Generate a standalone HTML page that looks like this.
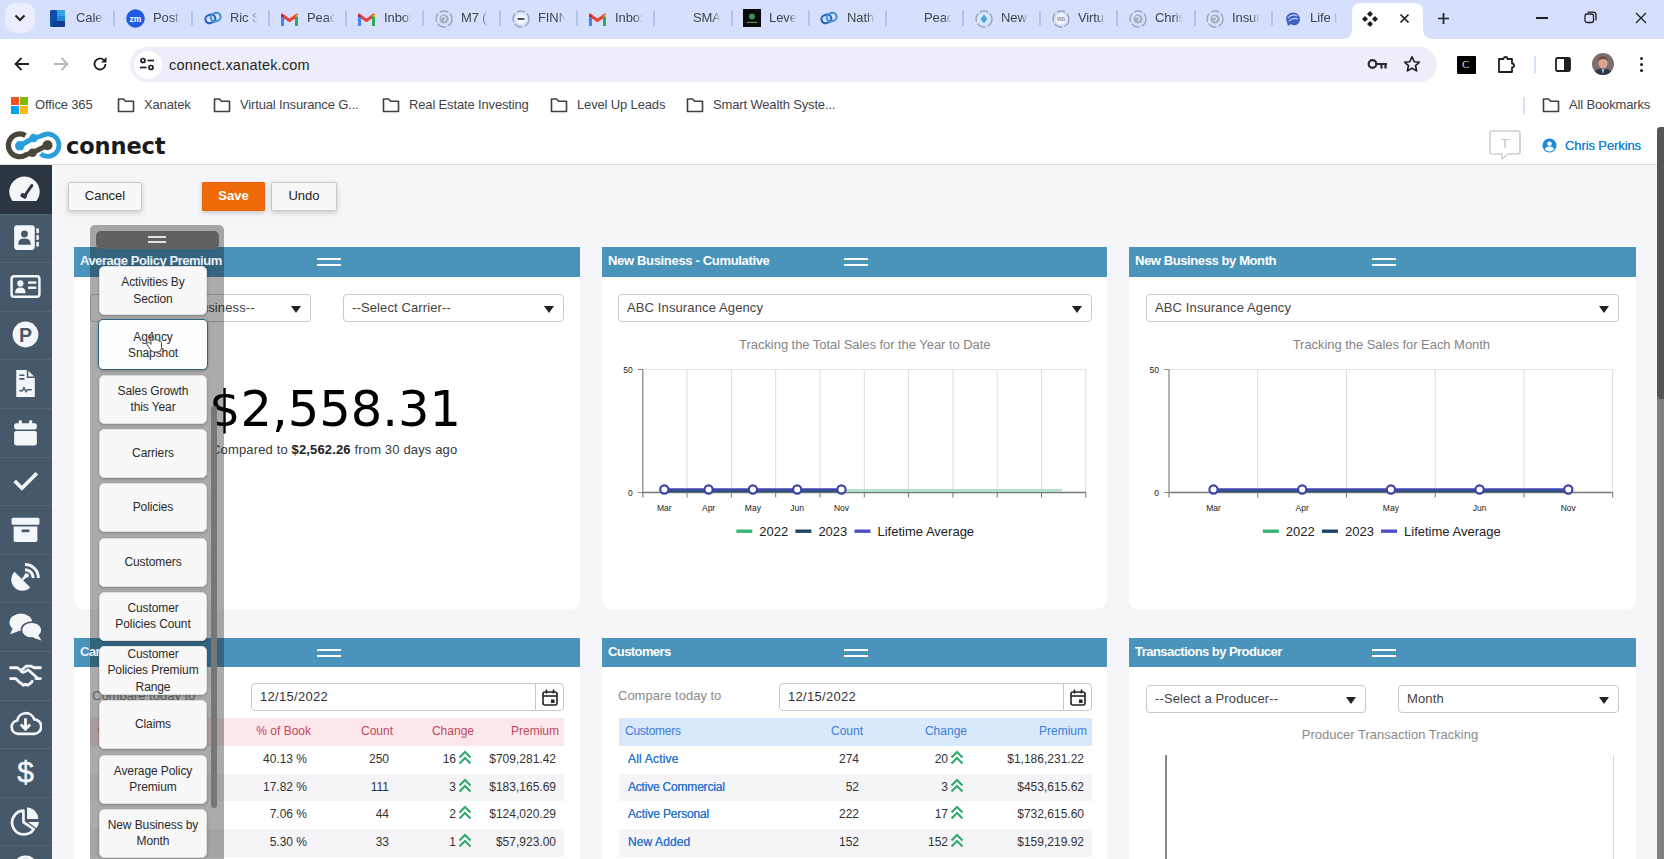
<!DOCTYPE html>
<html lang="en">
<head>
<meta charset="utf-8">
<title>connect</title>
<style>
*{box-sizing:border-box;margin:0;padding:0}
html,body{width:1664px;height:859px;overflow:hidden;background:#f6f6f9;font-family:"Liberation Sans",sans-serif;color:#333}
.abs{position:absolute}
#chrome{position:absolute;left:0;top:0;width:1664px;height:124px;background:#fff}
#tabstrip{position:absolute;left:0;top:0;width:1664px;height:39px;background:#d6e0fc}
.tab{position:absolute;top:0;height:39px;font-size:14px;color:#3c4043;white-space:nowrap}
.ttl{position:absolute;top:9px;left:0;font-size:13px;letter-spacing:-.1px;line-height:18px;color:#41464d;width:29px;overflow:hidden;white-space:nowrap;-webkit-mask-image:linear-gradient(90deg,#000 68%,transparent 96%);mask-image:linear-gradient(90deg,#000 68%,transparent 96%)}
.tsep{position:absolute;top:10px;width:2px;height:16px;background:#b0c4ef;border-radius:1px}
#toolbar{position:absolute;left:0;top:39px;width:1664px;height:49px;background:#fff}
#omni{position:absolute;left:130px;top:8px;width:1307px;height:35px;border-radius:17.500px;background:#eeeefa}
#omni .url{position:absolute;left:39px;top:8.500px;font-size:14.5px;line-height:18px;color:#1f1f1f;letter-spacing:0.2px}
#bm{position:absolute;left:0;top:88px;width:1664px;height:36px;background:#fff;font-size:13px;color:#3c4043}
.bmi{position:absolute;top:9px;line-height:16px;white-space:nowrap;color:#40444a;letter-spacing:-0.15px}
#app{position:absolute;left:0;top:124px;width:1664px;height:735px;background:#f6f6f9;overflow:hidden}
#apphead{position:absolute;left:0;top:0;width:1664px;height:41px;background:#fff;border-bottom:1px solid #dcdcdc}
#side{position:absolute;left:0;top:41px;width:52px;height:700px;background:#46596a}
.si{position:absolute;left:0;width:52px;height:49px;border-top:1px solid #526575}
.si svg{position:absolute;left:9px;top:6.500px;width:33px;height:33px}
.btn{position:absolute;top:58px;height:29px;border:1px solid #c9c9c9;background:#f8f8f8;border-radius:2px;font-size:13px;line-height:26px;text-align:center;color:#222;box-shadow:0 2px 5px rgba(0,0,0,.18)}
.card{position:absolute;background:#fff;border-radius:0 0 9px 9px}
.chead{position:absolute;left:0;top:0;width:100%;height:30px;background:#4a93ba;color:#fff;font-weight:700;font-size:13px;line-height:28px;padding-left:6px;letter-spacing:-0.35px}
.ham{position:absolute;top:11px;width:24px;height:8px;margin-left:-1px;border-top:2px solid #fff;border-bottom:2px solid #fff}
.sel{position:absolute;height:28px;border:1px solid #c8c8c8;border-radius:4px;background:#fff;font-size:13px;line-height:26px;padding-left:8px;color:#444;white-space:nowrap;letter-spacing:.12px}
.sel:after{content:"";position:absolute;right:9px;top:11px;border:5px solid transparent;border-top:7px solid #222;border-bottom:0}
.ctitle{position:absolute;font-size:13px;color:#8a8a8a;text-align:center;white-space:nowrap}
svg text{font-family:"Liberation Sans",sans-serif}
.tbl{position:absolute;font-size:12px}
.tr{position:absolute;left:0;width:100%;height:28px;line-height:27px}
.tr span{position:absolute;white-space:nowrap;text-align:right}
#panelbg{position:absolute;left:90px;top:101px;width:134px;height:640px;background:rgba(15,15,15,.35);border-radius:5px 5px 0 0;z-index:1}
#panel{position:absolute;left:90px;top:101px;width:134px;height:640px;z-index:3}
.pb{position:absolute;left:9px;width:108px;height:49px;background:#f8f8f8;border:1px solid #ddd;border-radius:5px;font-size:12px;letter-spacing:-.1px;line-height:16.5px;text-align:center;color:#2a2a2a;display:flex;align-items:center;justify-content:center;box-shadow:0 1px 3px rgba(0,0,0,.25)}
</style>
</head>
<body>
<div id="chrome">
 <div id="tabstrip">
<div class="abs" style="left:5px;top:3px;width:30px;height:30px;border-radius:10px;background:#e9edfd"></div>
<svg class="abs" style="left:14px;top:13.500px" width="12" height="8" viewBox="0 0 12 8"><path d="M1.500 1.500l4.500 4.500 4.500-4.500" fill="none" stroke="#1f1f1f" stroke-width="2"/></svg>
<svg class="abs" style="left:50px;top:10px" width="15" height="17" viewBox="0 0 15 17"><rect x="0" y="0" width="15" height="17" rx="2" fill="#1a6fd0"/><rect x="0" y="0" width="7" height="17" rx="2" fill="#0d4fa6"/><rect x="7" y="0" width="8" height="6" fill="#35a3ec"/><rect x="7" y="6" width="8" height="5" fill="#1d86dd"/><rect x="3" y="11" width="12" height="6" rx="1" fill="#0b3f8c"/></svg>
<span class="ttl" style="left:76px">Calen</span>
<svg class="abs" style="left:126px;top:9px" width="19" height="19" viewBox="0 0 19 19"><circle cx="9.500" cy="9.500" r="9.300" fill="#1f5ae0"/><text x="9.500" y="12.500" font-size="8.500" text-anchor="middle" fill="#fff" font-weight="700">zm</text></svg>
<span class="ttl" style="left:153px">Post</span>
<svg class="abs" style="left:204px;top:10px" width="18" height="16" viewBox="0 0 18 16"><g transform="rotate(-18 9 8)"><rect x="1.2" y="4" width="10" height="8" rx="4" fill="none" stroke="#2a62b8" stroke-width="2"/><rect x="6.8" y="4" width="10" height="8" rx="4" fill="none" stroke="#3f8fd6" stroke-width="2"/></g></svg>
<span class="ttl" style="left:230px">Ric S</span>
<svg class="abs" style="left:281px;top:12px" width="17" height="14" viewBox="0 0 17 14"><path d="M1 13V3l7.5 5.5L16 3v10" fill="none" stroke="#ea4335" stroke-width="3" stroke-linejoin="round"/><rect x="0" y="4" width="3" height="10" fill="#4285f4"/><rect x="14" y="4" width="3" height="10" fill="#34a853"/><path d="M14 4l3-2v3z" fill="#fbbc04"/><path d="M0 2l3 2v1H0z" fill="#c5221f"/></svg>
<span class="ttl" style="left:307px">Peach</span>
<svg class="abs" style="left:358px;top:12px" width="17" height="14" viewBox="0 0 17 14"><path d="M1 13V3l7.5 5.5L16 3v10" fill="none" stroke="#ea4335" stroke-width="3" stroke-linejoin="round"/><rect x="0" y="4" width="3" height="10" fill="#4285f4"/><rect x="14" y="4" width="3" height="10" fill="#34a853"/><path d="M14 4l3-2v3z" fill="#fbbc04"/><path d="M0 2l3 2v1H0z" fill="#c5221f"/></svg>
<span class="ttl" style="left:384px">Inbox</span>
<svg class="abs" style="left:435px;top:10px" width="18" height="18" viewBox="0 0 18 18"><circle cx="9" cy="9" r="8" fill="none" stroke="#9aa3b5" stroke-width="1.3" stroke-dasharray="9 2"/><circle cx="9" cy="9" r="4.6" fill="#a9b0c0"/><path d="M6.5 7.5q2-2 3.5 0t-1 3.5" fill="none" stroke="#e6ebf8" stroke-width="1.2"/></svg>
<span class="ttl" style="left:461px">M7 (</span>
<svg class="abs" style="left:512px;top:10px" width="18" height="18" viewBox="0 0 18 18"><circle cx="9" cy="9" r="8" fill="none" stroke="#9aa3b5" stroke-width="1.3" stroke-dasharray="9 2"/><circle cx="9" cy="9" r="5.2" fill="#f4f6fc"/><rect x="5.5" y="8" width="7" height="2" fill="#555"/></svg>
<span class="ttl" style="left:538px">FINNI</span>
<svg class="abs" style="left:589px;top:12px" width="17" height="14" viewBox="0 0 17 14"><path d="M1 13V3l7.5 5.5L16 3v10" fill="none" stroke="#ea4335" stroke-width="3" stroke-linejoin="round"/><rect x="0" y="4" width="3" height="10" fill="#4285f4"/><rect x="14" y="4" width="3" height="10" fill="#34a853"/><path d="M14 4l3-2v3z" fill="#fbbc04"/><path d="M0 2l3 2v1H0z" fill="#c5221f"/></svg>
<span class="ttl" style="left:615px">Inbox</span>
<span class="ttl" style="left:693px">SMAR</span>
<svg class="abs" style="left:743px;top:9px" width="18" height="18" viewBox="0 0 19 19"><rect width="19" height="19" fill="#0a0a0a"/><circle cx="9.500" cy="8" r="3.200" fill="#3c8a57"/><rect x="4" y="13.500" width="11" height="1.200" fill="#6f8f78"/></svg>
<span class="ttl" style="left:769px">Level</span>
<svg class="abs" style="left:820px;top:10px" width="18" height="16" viewBox="0 0 18 16"><g transform="rotate(-18 9 8)"><rect x="1.2" y="4" width="10" height="8" rx="4" fill="none" stroke="#2a62b8" stroke-width="2"/><rect x="6.8" y="4" width="10" height="8" rx="4" fill="none" stroke="#3f8fd6" stroke-width="2"/></g></svg>
<span class="ttl" style="left:847px">Natha</span>
<span class="ttl" style="left:924px">Peach</span>
<svg class="abs" style="left:975px;top:10px" width="18" height="18" viewBox="0 0 18 18"><circle cx="9" cy="9" r="8" fill="none" stroke="#9aa3b5" stroke-width="1.3" stroke-dasharray="9 2"/><circle cx="9" cy="9" r="5.5" fill="#d9ecfa"/><path d="M9 4.5l3.5 4.5L9 13.500 5.500 9z" fill="#4aa6dc"/></svg>
<span class="ttl" style="left:1001px">New</span>
<svg class="abs" style="left:1052px;top:10px" width="18" height="18" viewBox="0 0 18 18"><circle cx="9" cy="9" r="8" fill="none" stroke="#9aa3b5" stroke-width="1.3" stroke-dasharray="9 2"/><circle cx="9" cy="9" r="5.5" fill="#f1f4fb"/><text x="9" y="11" font-size="5" text-anchor="middle" fill="#7a8190" font-weight="700">VIG</text></svg>
<span class="ttl" style="left:1078px">Virtu</span>
<svg class="abs" style="left:1129px;top:10px" width="18" height="18" viewBox="0 0 18 18"><circle cx="9" cy="9" r="8" fill="none" stroke="#9aa3b5" stroke-width="1.3" stroke-dasharray="9 2"/><circle cx="9" cy="9" r="4.6" fill="#a9b0c0"/><path d="M6.5 7.5q2-2 3.5 0t-1 3.5" fill="none" stroke="#e6ebf8" stroke-width="1.2"/></svg>
<span class="ttl" style="left:1155px">Chris</span>
<svg class="abs" style="left:1206px;top:10px" width="18" height="18" viewBox="0 0 18 18"><circle cx="9" cy="9" r="8" fill="none" stroke="#9aa3b5" stroke-width="1.3" stroke-dasharray="9 2"/><circle cx="9" cy="9" r="4.6" fill="#a9b0c0"/><path d="M6.5 7.5q2-2 3.5 0t-1 3.5" fill="none" stroke="#e6ebf8" stroke-width="1.2"/></svg>
<span class="ttl" style="left:1232px">Insur</span>
<svg class="abs" style="left:1283px;top:9px" width="19" height="19" viewBox="0 0 19 19"><path d="M3 10a7 7 0 0 1 13-3 6 6 0 0 1-3 9q-3 1-5-1l-3 2z" fill="#3d62c4"/><path d="M5 9q4-5 9-2M6 12q4-4 9-2" stroke="#c5d3f5" stroke-width="1.200" fill="none"/></svg>
<span class="ttl" style="left:1310px">Life I</span>
<div class="tsep" style="left:113px"></div>
<div class="tsep" style="left:191px"></div>
<div class="tsep" style="left:268px"></div>
<div class="tsep" style="left:345px"></div>
<div class="tsep" style="left:422px"></div>
<div class="tsep" style="left:499px"></div>
<div class="tsep" style="left:576px"></div>
<div class="tsep" style="left:653px"></div>
<div class="tsep" style="left:731px"></div>
<div class="tsep" style="left:808px"></div>
<div class="tsep" style="left:885px"></div>
<div class="tsep" style="left:962px"></div>
<div class="tsep" style="left:1039px"></div>
<div class="tsep" style="left:1116px"></div>
<div class="tsep" style="left:1194px"></div>
<div class="tsep" style="left:1271px"></div>
<svg class="abs" style="left:1342px;top:3px" width="92" height="36" viewBox="0 0 92 36"><path d="M0 36q10 0 10-10V9q0-9 9-9h52q10 0 10 9v17q0 10 11 10z" fill="#fff"/></svg>
<svg class="abs" style="left:1361px;top:10px" width="18" height="18" viewBox="0 0 18 18"><g fill="#1f1f1f"><path d="M9 1l3 3-3 3-3-3z"/><path d="M9 11l3 3-3 3-3-3z"/><path d="M4 6l3 3-3 3-3-3z"/><path d="M14 6l3 3-3 3-3-3z"/></g></svg>
<svg class="abs" style="left:1399px;top:13px" width="11" height="11" viewBox="0 0 11 11"><path d="M1.500 1.500l8 8M9.500 1.500l-8 8" stroke="#1f1f1f" stroke-width="1.700"/></svg>
<svg class="abs" style="left:1437px;top:12px" width="13" height="13" viewBox="0 0 13 13"><path d="M6.500 1v11M1 6.500h11" stroke="#1f1f1f" stroke-width="1.700"/></svg>
<div class="abs" style="left:1536px;top:17px;width:12px;height:1.500px;background:#1f1f1f"></div>
<svg class="abs" style="left:1584px;top:11px" width="13" height="13" viewBox="0 0 13 13"><rect x="1" y="3" width="8.500" height="8.500" rx="2" fill="none" stroke="#1f1f1f" stroke-width="1.300"/><path d="M3.500 1.200h5.500q3 0 3 3v5.300" fill="none" stroke="#1f1f1f" stroke-width="1.300"/></svg>
<svg class="abs" style="left:1635px;top:12px" width="12" height="12" viewBox="0 0 12 12"><path d="M1 1l10 10M11 1l-10 10" stroke="#1f1f1f" stroke-width="1.300"/></svg>
</div>
 <div id="toolbar">
<svg class="abs" style="left:14px;top:18px" width="16" height="14" viewBox="0 0 16 14"><path d="M15 7H2M7.500 1L1.500 7l6 6" fill="none" stroke="#1f1f1f" stroke-width="1.800"/></svg>
<svg class="abs" style="left:53px;top:18px" width="16" height="14" viewBox="0 0 16 14"><path d="M1 7h13M8.500 1l6 6-6 6" fill="none" stroke="#b4b7bd" stroke-width="1.800"/></svg>
<svg class="abs" style="left:92px;top:17px" width="16" height="16" viewBox="0 0 16 16"><path d="M13.500 8a5.500 5.500 0 1 1-1.700-4" fill="none" stroke="#1f1f1f" stroke-width="1.800"/><path d="M14.500 1v5.500H9z" fill="#1f1f1f"/></svg>
<div id="omni">
 <div class="abs" style="left:4px;top:3.500px;width:28px;height:28px;border-radius:14px;background:#fff"></div>
 <svg class="abs" style="left:9px;top:10px" width="16" height="14" viewBox="0 0 16 14"><g fill="none" stroke="#1f1f1f" stroke-width="1.700"><circle cx="4" cy="3.500" r="2"/><path d="M8.500 3.500H15"/><circle cx="12" cy="10.500" r="2"/><path d="M1 10.500h6.500"/></g></svg>
 <span class="url">connect.xanatek.com</span>
 <svg class="abs" style="left:1237px;top:11px" width="22" height="13" viewBox="0 0 22 13"><circle cx="5.500" cy="6" r="3.800" fill="none" stroke="#2a2a2e" stroke-width="2.200"/><path d="M9.500 6H20M14.500 6v4.500M18.500 6v4.500" fill="none" stroke="#2a2a2e" stroke-width="2.200"/></svg>
 <svg class="abs" style="left:1273px;top:8px" width="18" height="18" viewBox="0 0 18 18"><path d="M9 1.800l2.200 4.900 5.300.5-4 3.500 1.200 5.200L9 13.200l-4.700 2.700 1.200-5.200-4-3.500 5.300-.5z" fill="none" stroke="#1f1f1f" stroke-width="1.600" stroke-linejoin="round"/></svg>
</div>
<div class="abs" style="left:1457px;top:17px;width:19px;height:18px;background:#000;border-radius:1px"></div>
<span class="abs" style="left:1462px;top:19px;font-size:11px;line-height:13px;color:#ddd;font-family:'Liberation Serif',serif">C</span>
<svg class="abs" style="left:1496px;top:16px" width="20" height="20" viewBox="0 0 20 20"><path d="M7.500 4a2 2 0 0 1 4 0h4.500v4.500a2 2 0 0 1 0 4V17H3V4z" fill="none" stroke="#1f1f1f" stroke-width="1.800" stroke-linejoin="round"/></svg>
<div class="abs" style="left:1534px;top:17px;width:2px;height:17px;background:#d8e2f7"></div>
<svg class="abs" style="left:1555px;top:18px" width="16" height="15" viewBox="0 0 16 15"><rect x="1" y="1" width="14" height="13" rx="1.500" fill="none" stroke="#1f1f1f" stroke-width="1.800"/><rect x="9" y="1" width="6" height="13" fill="#1f1f1f"/></svg>
<svg class="abs" style="left:1592px;top:14px" width="22" height="22" viewBox="0 0 22 22"><defs><clipPath id="av"><circle cx="11" cy="11" r="11"/></clipPath></defs><g clip-path="url(#av)"><rect width="22" height="22" fill="#7d6f6c"/><path d="M1 22q1-6.500 10-6.500T21 22z" fill="#2c3547"/><path d="M9.500 16l1.500 5 1.500-5z" fill="#7fc4c4"/><ellipse cx="11" cy="10" rx="4.600" ry="5.600" fill="#d9a58e"/><path d="M6.300 9q-.300-5.500 4.700-5.500T15.700 9q-.700-3-4.700-3T6.300 9z" fill="#6b4a3a"/></g></svg>
<div class="abs" style="left:1640px;top:18px;width:3px;height:3px;border-radius:2px;background:#1f1f1f;box-shadow:0 6px 0 #1f1f1f,0 12px 0 #1f1f1f"></div>

</div>
 <div id="bm">
<svg class="abs" style="left:11px;top:9px" width="17" height="17" viewBox="0 0 17 17"><rect x="0" y="0" width="8" height="8" fill="#f25022"/><rect x="9" y="0" width="8" height="8" fill="#7fba00"/><rect x="0" y="9" width="8" height="8" fill="#00a4ef"/><rect x="9" y="9" width="8" height="8" fill="#ffb900"/></svg>
<span class="bmi" style="left:35px">Office 365</span>
<svg class="abs fld" style="left:117px;top:10px" width="18" height="15" viewBox="0 0 18 15"><path d="M1.500 1h5l2 2.200h8v10.300h-15z" fill="none" stroke="#3c4043" stroke-width="1.600" stroke-linejoin="round"/></svg>
<span class="bmi" style="left:144px">Xanatek</span>
<svg class="abs fld" style="left:213px;top:10px" width="18" height="15" viewBox="0 0 18 15"><path d="M1.500 1h5l2 2.200h8v10.300h-15z" fill="none" stroke="#3c4043" stroke-width="1.600" stroke-linejoin="round"/></svg>
<span class="bmi" style="left:240px">Virtual Insurance G...</span>
<svg class="abs fld" style="left:382px;top:10px" width="18" height="15" viewBox="0 0 18 15"><path d="M1.500 1h5l2 2.200h8v10.300h-15z" fill="none" stroke="#3c4043" stroke-width="1.600" stroke-linejoin="round"/></svg>
<span class="bmi" style="left:409px">Real Estate Investing</span>
<svg class="abs fld" style="left:550px;top:10px" width="18" height="15" viewBox="0 0 18 15"><path d="M1.500 1h5l2 2.200h8v10.300h-15z" fill="none" stroke="#3c4043" stroke-width="1.600" stroke-linejoin="round"/></svg>
<span class="bmi" style="left:577px">Level Up Leads</span>
<svg class="abs fld" style="left:686px;top:10px" width="18" height="15" viewBox="0 0 18 15"><path d="M1.500 1h5l2 2.200h8v10.300h-15z" fill="none" stroke="#3c4043" stroke-width="1.600" stroke-linejoin="round"/></svg>
<span class="bmi" style="left:713px">Smart Wealth Syste...</span>
<div class="abs" style="left:1523px;top:9px;width:2px;height:17px;background:#d8e2f7"></div>
<svg class="abs fld" style="left:1542px;top:10px" width="18" height="15" viewBox="0 0 18 15"><path d="M1.500 1h5l2 2.200h8v10.300h-15z" fill="none" stroke="#3c4043" stroke-width="1.600" stroke-linejoin="round"/></svg>
<span class="bmi" style="left:1569px">All Bookmarks</span>

</div>
</div>
<div id="app">
 <div id="apphead">
<svg class="abs" style="left:3px;top:5px" width="62" height="34" viewBox="0 0 62 34">
 <path d="M22.500 6.500A11.400 11.400 0 1 0 23.300 25.700" fill="none" stroke="#4a4638" stroke-width="5.200"/>
 <path d="M38.400 7A11.200 11.200 0 1 1 37.600 24.800" fill="none" stroke="#2a9fdb" stroke-width="4.800"/>
 <path d="M16.800 16.800L30.600 9" stroke="#2a9fdb" stroke-width="5" stroke-linecap="round"/>
 <circle cx="16.800" cy="16.800" r="4.800" fill="#2a9fdb"/><circle cx="30.600" cy="9" r="4.300" fill="#2a9fdb"/><path d="M30.600 9L38.400 7" stroke="#2a9fdb" stroke-width="4.800" stroke-linecap="round"/>
 <path d="M44.500 16.200L29.500 23.700" stroke="#4a4638" stroke-width="5" stroke-linecap="round"/>
 <circle cx="44.500" cy="16.200" r="5" fill="#4a4638"/><circle cx="29.500" cy="23.700" r="4.300" fill="#4a4638"/><path d="M29.500 23.700L23.300 25.700" stroke="#4a4638" stroke-width="5" stroke-linecap="round"/>
</svg>
<span class="abs" style="left:66px;top:8px;font-family:'DejaVu Sans',sans-serif;font-weight:700;font-size:22.5px;line-height:28px;color:#1a1a1a;letter-spacing:-0.1px">connect</span>
<svg class="abs" style="left:1488px;top:5px" width="34" height="32" viewBox="0 0 34 32"><path d="M4 2h26q2 0 2 2v19q0 2-2 2H20l-6 5v-5H4q-2 0-2-2V4q0-2 2-2z" fill="#fff" stroke="#cfcfcf" stroke-width="1.600" stroke-linejoin="round"/><text x="17" y="18.500" font-size="13" text-anchor="middle" fill="#c4c4c4">T</text></svg>
<svg class="abs" style="left:1542px;top:14px" width="15" height="15" viewBox="0 0 15 15"><circle cx="7.500" cy="7.500" r="7" fill="#1b8bd8"/><circle cx="7.500" cy="5.800" r="2.300" fill="#fff"/><path d="M3 11.500q0-3 4.500-3t4.500 3q-2 2-4.500 2T3 11.500z" fill="#fff"/></svg>
<span class="abs" style="left:1565px;top:14px;font-size:13px;line-height:16px;color:#1b84d0;white-space:nowrap;letter-spacing:-0.1px;text-shadow:0 0 .4px #1b84d0">Chris Perkins</span>

</div>
 <div id="side">
<div class="si" style="top:0.0px;background:#2b3642;border-top:0;"><svg viewBox="0 0 32 32"><path d="M2.800 27.500A14.750 14.750 0 1 1 27.200 27.500Q26.800 28 26 28H4Q3.200 28 2.800 27.500z" fill="#f4f7fa"/><path d="M22.200 13L15.200 23" stroke="#2b3642" stroke-width="2.800" stroke-linecap="round"/><rect x="11.300" y="21" width="6" height="4.200" rx="1" fill="#2b3642" transform="rotate(30 14.300 23.100)"/></svg></div>
<div class="si" style="top:48.6px;"><svg viewBox="0 0 32 32"><rect x="5" y="4" width="20" height="24" rx="3" fill="#f4f7fa"/><circle cx="15" cy="12.500" r="3.300" fill="#46596a"/><path d="M9 22q0-5 6-5t6 5v1H9z" fill="#46596a"/><rect x="26.500" y="7" width="2.500" height="5" rx="1" fill="#f4f7fa"/><rect x="26.500" y="13.500" width="2.500" height="5" rx="1" fill="#f4f7fa"/><rect x="26.500" y="20" width="2.500" height="5" rx="1" fill="#f4f7fa"/></svg></div>
<div class="si" style="top:97.2px;"><svg viewBox="0 0 32 32"><rect x="2.500" y="6" width="27" height="20" rx="2.500" fill="none" stroke="#f4f7fa" stroke-width="2.400"/><circle cx="11" cy="13" r="3" fill="#f4f7fa"/><path d="M6 22q0-5 5-5t5 5v.500H6z" fill="#f4f7fa"/><rect x="18.500" y="11" width="8" height="2.400" fill="#f4f7fa"/><rect x="18.500" y="16" width="8" height="2.400" fill="#f4f7fa"/></svg></div>
<div class="si" style="top:145.8px;"><svg viewBox="0 0 32 32"><circle cx="16" cy="16" r="12.500" fill="#f4f7fa"/><text x="16" y="23" font-size="19" font-weight="700" text-anchor="middle" fill="#46596a">P</text></svg></div>
<div class="si" style="top:194.4px;"><svg viewBox="0 0 32 32"><path d="M7 3h11l7 7v19H7z" fill="#f4f7fa"/><path d="M18 3v7h7" fill="none" stroke="#46596a" stroke-width="1.500"/><path d="M10 8h5M10 11.500h5" stroke="#46596a" stroke-width="1.500"/><path d="M10 23h3l1.500-3 2 4 1.500-2h4" fill="none" stroke="#46596a" stroke-width="1.400"/></svg></div>
<div class="si" style="top:243.0px;"><svg viewBox="0 0 32 32"><rect x="5" y="7" width="22" height="6" rx="2" fill="#f4f7fa"/><rect x="5" y="14.500" width="22" height="14" rx="2" fill="#f4f7fa"/><rect x="9.500" y="4" width="3" height="6" rx="1.200" fill="#f4f7fa"/><rect x="19.500" y="4" width="3" height="6" rx="1.200" fill="#f4f7fa"/></svg></div>
<div class="si" style="top:291.6px;"><svg viewBox="0 0 32 32"><path d="M5.500 16.500l7 7L27 9" fill="none" stroke="#f4f7fa" stroke-width="3.600"/></svg></div>
<div class="si" style="top:340.2px;"><svg viewBox="0 0 32 32"><rect x="2.500" y="4.500" width="27" height="7" rx="1.500" fill="#f4f7fa"/><path d="M4.500 13h23v13.500q0 1.500-1.500 1.500h-20q-1.500 0-1.500-1.500z" fill="#f4f7fa"/><rect x="12" y="16" width="8" height="2.600" rx="1.300" fill="#46596a"/></svg></div>
<div class="si" style="top:388.8px;"><svg viewBox="0 0 32 32"><path d="M5.400 10.400A10.500 10.500 0 0 0 20.600 25.600z" fill="#f4f7fa"/><path d="M13 18l3.500-3.500" stroke="#f4f7fa" stroke-width="2.400"/><circle cx="17" cy="14" r="2.200" fill="#f4f7fa"/><path d="M15.500 8.500a8 8 0 0 1 8 8M15.500 3.500a13 13 0 0 1 13 13" fill="none" stroke="#f4f7fa" stroke-width="2.900"/></svg></div>
<div class="si" style="top:437.4px;"><svg viewBox="0 0 32 32"><ellipse cx="11.500" cy="12" rx="11" ry="8.500" fill="#f4f7fa"/><path d="M4 17l-3 6.500 8-3z" fill="#f4f7fa"/><ellipse cx="22" cy="19.500" rx="10" ry="7.800" fill="#f4f7fa" stroke="#46596a" stroke-width="1.600"/><path d="M28 24l3.500 5.500-8-2.500z" fill="#f4f7fa"/></svg></div>
<div class="si" style="top:486.0px;"><svg viewBox="0 0 32 32"><g transform="translate(0 -2)" fill="none" stroke="#f4f7fa" stroke-width="2.700" stroke-linejoin="round" stroke-linecap="round"><path d="M1.500 10.500h6.500l3 2M1.500 21h5l3.500 3.500 2.500 1.500M30.500 10.500h-6l-3-1.500h-5l-5 4.500q1.500 2.500 4.500.500l2.500-1.500 8.500 7.500M30.500 21h-4.500M12 26l2 1.500 2-1 2 1 2-1.500 1.500-1 1-1.500"/></g></svg></div>
<div class="si" style="top:534.6px;"><svg viewBox="0 0 32 32"><path d="M9 26a6.500 6.500 0 0 1-1-12.900A8.500 8.500 0 0 1 24.500 12 6.500 6.500 0 0 1 24 26z" fill="none" stroke="#f4f7fa" stroke-width="2.600" stroke-linejoin="round"/><path d="M16 11v10M11.500 17l4.500 4.500 4.500-4.500" fill="none" stroke="#f4f7fa" stroke-width="2.800"/></svg></div>
<div class="si" style="top:583.2px;"><svg viewBox="0 0 32 32"><text x="16" y="25.500" font-size="29" font-weight="400" text-anchor="middle" fill="#f4f7fa" stroke="#f4f7fa" stroke-width=".500">$</text></svg></div>
<div class="si" style="top:631.8px;"><svg viewBox="0 0 32 32"><path d="M14 6.500A11.500 11.500 0 1 0 24 24.500L14 17.500z" fill="none" stroke="#f4f7fa" stroke-width="2.600" stroke-linejoin="round"/><path d="M17.500 3.500A11.500 11.500 0 0 1 28.500 14.500h-11z" fill="#f4f7fa"/><path d="M18.500 17.500h10.500a11 11 0 0 1-2.500 6z" fill="#f4f7fa"/></svg></div>
<div class="si" style="top:680.4px;"><svg viewBox="0 0 32 32"><circle cx="16" cy="15" r="11" fill="none" stroke="#f4f7fa" stroke-width="3"/></svg></div>
</div>
 <div class="btn" style="left:68px;width:74px">Cancel</div>
<div class="btn" style="left:202px;width:63px;background:#f06a0a;border-color:#e8620a;border-radius:1px;color:#fff;font-weight:700">Save</div>
<div class="btn" style="left:271px;width:66px">Undo</div>
<div class="card" style="left:74px;top:123px;width:506px;height:362px"><div class="chead" style="letter-spacing:-0.46px"><span style="position:relative;z-index:2;color:#e9f1f7">Average Policy Premium</span></div><div class="ham" style="left:244px"></div><div class="sel" style="left:16px;top:47px;width:221px">--Select Line of Business--</div>
<div class="sel" style="left:269px;top:47px;width:221px">--Select Carrier--</div>
<div class="abs" style="left:135px;top:132px;font-family:'DejaVu Sans',sans-serif;font-size:49.5px;line-height:60px;color:#000;white-space:nowrap">$2,558.31</div>
<div class="abs" style="left:137px;top:195px;font-size:13px;line-height:16px;color:#3a3a3a;white-space:nowrap;letter-spacing:.15px">Compared to <b style="color:#222">$2,562.26</b> from 30 days ago</div></div>
<div class="card" style="left:602px;top:123px;width:505px;height:362px"><div class="chead" style="letter-spacing:-0.33px"><span style="position:relative;z-index:2;color:#fff">New Business - Cumulative</span></div><div class="ham" style="left:243px"></div><div class="sel" style="left:16px;top:47px;width:474px">ABC Insurance Agency</div><svg class="abs" style="left:0;top:30px" width="506" height="330" viewBox="0 0 506 330"><path d="M85.1 92.5V215.5" stroke="#dcdcdc" stroke-width="1"/><path d="M85.1 215.5v5" stroke="#777" stroke-width="1"/><path d="M129.4 92.5V215.5" stroke="#dcdcdc" stroke-width="1"/><path d="M129.4 215.5v5" stroke="#777" stroke-width="1"/><path d="M173.7 92.5V215.5" stroke="#dcdcdc" stroke-width="1"/><path d="M173.7 215.5v5" stroke="#777" stroke-width="1"/><path d="M218.0 92.5V215.5" stroke="#dcdcdc" stroke-width="1"/><path d="M218.0 215.5v5" stroke="#777" stroke-width="1"/><path d="M262.3 92.5V215.5" stroke="#dcdcdc" stroke-width="1"/><path d="M262.3 215.5v5" stroke="#777" stroke-width="1"/><path d="M306.6 92.5V215.5" stroke="#dcdcdc" stroke-width="1"/><path d="M306.6 215.5v5" stroke="#777" stroke-width="1"/><path d="M350.9 92.5V215.5" stroke="#dcdcdc" stroke-width="1"/><path d="M350.9 215.5v5" stroke="#777" stroke-width="1"/><path d="M395.2 92.5V215.5" stroke="#dcdcdc" stroke-width="1"/><path d="M395.2 215.5v5" stroke="#777" stroke-width="1"/><path d="M439.5 92.5V215.5" stroke="#dcdcdc" stroke-width="1"/><path d="M439.5 215.5v5" stroke="#777" stroke-width="1"/><path d="M483.8 92.5V215.5" stroke="#dcdcdc" stroke-width="1"/><path d="M483.8 215.5v5" stroke="#777" stroke-width="1"/><path d="M40.8 92.5H483.8" stroke="#e4e4e4" stroke-width="1"/><path d="M40.8 92.5V220.5" stroke="#8a8a8a" stroke-width="1.300"/><path d="M35.8 92.5h5M35.8 215.5h5" stroke="#8a8a8a" stroke-width="1"/><path d="M40.8 215.5H483.8" stroke="#777" stroke-width="1.400"/><path d="M62.3 213.5H460" stroke="#b2e0c8" stroke-width="3"/><path d="M62.3 214.0H239.5" stroke="#2a5578" stroke-width="2.400"/><path d="M62.3 212.3H239.5" stroke="#4347b0" stroke-width="2.200"/><circle cx="62.3" cy="212.5" r="4.100" fill="#fff" stroke="#3d40a8" stroke-width="2.100"/><circle cx="106.6" cy="212.5" r="4.100" fill="#fff" stroke="#3d40a8" stroke-width="2.100"/><circle cx="150.9" cy="212.5" r="4.100" fill="#fff" stroke="#3d40a8" stroke-width="2.100"/><circle cx="195.2" cy="212.5" r="4.100" fill="#fff" stroke="#3d40a8" stroke-width="2.100"/><circle cx="239.5" cy="212.5" r="4.100" fill="#fff" stroke="#3d40a8" stroke-width="2.100"/><text x="30.799999999999997" y="95.5" font-size="8.500" text-anchor="end" fill="#222">50</text><text x="30.799999999999997" y="218.5" font-size="8.500" text-anchor="end" fill="#222">0</text><text x="62.3" y="234.0" font-size="8.500" text-anchor="middle" fill="#222">Mar</text><text x="106.6" y="234.0" font-size="8.500" text-anchor="middle" fill="#222">Apr</text><text x="150.9" y="234.0" font-size="8.500" text-anchor="middle" fill="#222">May</text><text x="195.2" y="234.0" font-size="8.500" text-anchor="middle" fill="#222">Jun</text><text x="239.5" y="234.0" font-size="8.500" text-anchor="middle" fill="#222">Nov</text><text x="262.8" y="71.5" font-size="13" text-anchor="middle" fill="#858585" letter-spacing="-0.05">Tracking the Total Sales for the Year to Date</text><rect x="134.3" y="252.5" width="16" height="3.400" fill="#3cb371"/><text x="157.3" y="258.5" font-size="13" fill="#222">2022</text><rect x="193.4" y="252.5" width="16" height="3.400" fill="#1e4466"/><text x="216.4" y="258.5" font-size="13" fill="#222">2023</text><rect x="252.5" y="252.5" width="16" height="3.400" fill="#4c4fc0"/><text x="275.5" y="258.5" font-size="13" fill="#222">Lifetime Average</text></svg></div>
<div class="card" style="left:1129px;top:123px;width:507px;height:362px"><div class="chead" style="letter-spacing:-0.4px"><span style="position:relative;z-index:2;color:#fff">New Business by Month</span></div><div class="ham" style="left:244px"></div><div class="sel" style="left:17px;top:47px;width:473px">ABC Insurance Agency</div><svg class="abs" style="left:0;top:30px" width="506" height="330" viewBox="0 0 506 330"><path d="M128.7 92.5V215.5" stroke="#dcdcdc" stroke-width="1"/><path d="M128.7 215.5v5" stroke="#777" stroke-width="1"/><path d="M217.5 92.5V215.5" stroke="#dcdcdc" stroke-width="1"/><path d="M217.5 215.5v5" stroke="#777" stroke-width="1"/><path d="M306.2 92.5V215.5" stroke="#dcdcdc" stroke-width="1"/><path d="M306.2 215.5v5" stroke="#777" stroke-width="1"/><path d="M395.0 92.5V215.5" stroke="#dcdcdc" stroke-width="1"/><path d="M395.0 215.5v5" stroke="#777" stroke-width="1"/><path d="M483.7 92.5V215.5" stroke="#dcdcdc" stroke-width="1"/><path d="M483.7 215.5v5" stroke="#777" stroke-width="1"/><path d="M40 92.5H483.7" stroke="#e4e4e4" stroke-width="1"/><path d="M40 92.5V220.5" stroke="#8a8a8a" stroke-width="1.300"/><path d="M35 92.5h5M35 215.5h5" stroke="#8a8a8a" stroke-width="1"/><path d="M40 215.5H483.7" stroke="#777" stroke-width="1.400"/><path d="M84.5 213.5H439.3" stroke="#b2e0c8" stroke-width="3"/><path d="M84.5 214.0H439.3" stroke="#2a5578" stroke-width="2.400"/><path d="M84.5 212.3H439.3" stroke="#4347b0" stroke-width="2.200"/><circle cx="84.5" cy="212.5" r="4.100" fill="#fff" stroke="#3d40a8" stroke-width="2.100"/><circle cx="173.2" cy="212.5" r="4.100" fill="#fff" stroke="#3d40a8" stroke-width="2.100"/><circle cx="261.9" cy="212.5" r="4.100" fill="#fff" stroke="#3d40a8" stroke-width="2.100"/><circle cx="350.6" cy="212.5" r="4.100" fill="#fff" stroke="#3d40a8" stroke-width="2.100"/><circle cx="439.3" cy="212.5" r="4.100" fill="#fff" stroke="#3d40a8" stroke-width="2.100"/><text x="30" y="95.5" font-size="8.500" text-anchor="end" fill="#222">50</text><text x="30" y="218.5" font-size="8.500" text-anchor="end" fill="#222">0</text><text x="84.5" y="234.0" font-size="8.500" text-anchor="middle" fill="#222">Mar</text><text x="173.2" y="234.0" font-size="8.500" text-anchor="middle" fill="#222">Apr</text><text x="261.9" y="234.0" font-size="8.500" text-anchor="middle" fill="#222">May</text><text x="350.6" y="234.0" font-size="8.500" text-anchor="middle" fill="#222">Jun</text><text x="439.3" y="234.0" font-size="8.500" text-anchor="middle" fill="#222">Nov</text><text x="262.35" y="71.5" font-size="13" text-anchor="middle" fill="#858585" letter-spacing="-0.05">Tracking the Sales for Each Month</text><rect x="133.85000000000002" y="252.5" width="16" height="3.400" fill="#3cb371"/><text x="156.85000000000002" y="258.5" font-size="13" fill="#222">2022</text><rect x="192.95000000000002" y="252.5" width="16" height="3.400" fill="#1e4466"/><text x="215.95000000000002" y="258.5" font-size="13" fill="#222">2023</text><rect x="252.05" y="252.5" width="16" height="3.400" fill="#4c4fc0"/><text x="275.05" y="258.5" font-size="13" fill="#222">Lifetime Average</text></svg></div>
<div class="card" style="left:74px;top:514px;width:506px;height:300px"><div class="chead" style="letter-spacing:-0.5px;height:29px"><span style="position:relative;z-index:2;color:#e9f1f7">Carriers</span></div><div class="ham" style="left:244px"></div><div class="abs" style="left:18px;top:50px;font-size:13px;line-height:16px;color:#8a8a8a;white-space:nowrap">Compare today to</div><div class="abs" style="left:177px;top:45px;width:313px;height:28px;border:1px solid #c8c8c8;border-radius:4px;background:#fff;font-size:13px;line-height:26px;padding-left:8px;color:#333;letter-spacing:.3px">12/15/2022<div class="abs" style="right:27px;top:0;width:1px;height:26px;background:#c8c8c8"></div><svg class="abs" style="left:290px;top:5px" width="16" height="17" viewBox="0 0 16 17"><rect x="1" y="3" width="14" height="13" rx="2" fill="none" stroke="#222" stroke-width="1.600"/><path d="M1 7h14" stroke="#222" stroke-width="1.600"/><path d="M4.500 0.500v4M11.500 0.500v4" stroke="#222" stroke-width="1.600"/><rect x="9" y="10.500" width="3.500" height="3.500" fill="#222"/></svg></div><div class="tbl" style="left:16px;top:80px;width:474px;height:200px"><div class="tr" style="top:0;background:#fce8ea;color:#c2475c"><span style="left:8px">Carriers</span><span style="right:253px">% of Book</span><span style="right:171px">Count</span><span style="right:90px">Change</span><span style="right:5px">Premium</span></div><div class="tr" style="top:27.6px;background:#fff;color:#333"><span style="right:257px">40.13 %</span><span style="right:175px">250</span><span style="right:108px">16</span><svg class="abs" style="left:368px;top:4px" width="14" height="15" viewBox="0 0 14 15"><path d="M1.500 7.500L7 2l5.500 5.500M1.500 13.500L7 8l5.500 5.500" fill="none" stroke="#2eaa68" stroke-width="2"/></svg><span style="right:8px">$709,281.42</span></div><div class="tr" style="top:55.5px;background:#f5f5f8;color:#333"><span style="right:257px">17.82 %</span><span style="right:175px">111</span><span style="right:108px">3</span><svg class="abs" style="left:368px;top:4px" width="14" height="15" viewBox="0 0 14 15"><path d="M1.500 7.500L7 2l5.500 5.500M1.500 13.500L7 8l5.500 5.500" fill="none" stroke="#2eaa68" stroke-width="2"/></svg><span style="right:8px">$183,165.69</span></div><div class="tr" style="top:83.4px;background:#fff;color:#333"><span style="right:257px">7.06 %</span><span style="right:175px">44</span><span style="right:108px">2</span><svg class="abs" style="left:368px;top:4px" width="14" height="15" viewBox="0 0 14 15"><path d="M1.500 7.500L7 2l5.500 5.500M1.500 13.500L7 8l5.500 5.500" fill="none" stroke="#2eaa68" stroke-width="2"/></svg><span style="right:8px">$124,020.29</span></div><div class="tr" style="top:111.3px;background:#f5f5f8;color:#333"><span style="right:257px">5.30 %</span><span style="right:175px">33</span><span style="right:108px">1</span><svg class="abs" style="left:368px;top:4px" width="14" height="15" viewBox="0 0 14 15"><path d="M1.500 7.500L7 2l5.500 5.500M1.500 13.500L7 8l5.500 5.500" fill="none" stroke="#2eaa68" stroke-width="2"/></svg><span style="right:8px">$57,923.00</span></div></div></div>
<div class="card" style="left:602px;top:514px;width:505px;height:300px"><div class="chead" style="letter-spacing:-0.59px;height:29px"><span style="position:relative;z-index:2;color:#fff">Customers</span></div><div class="ham" style="left:243px"></div><div class="abs" style="left:16px;top:50px;font-size:13px;line-height:16px;color:#8a8a8a;white-space:nowrap">Compare today to</div><div class="abs" style="left:177px;top:45px;width:313px;height:28px;border:1px solid #c8c8c8;border-radius:4px;background:#fff;font-size:13px;line-height:26px;padding-left:8px;color:#333;letter-spacing:.3px">12/15/2022<div class="abs" style="right:27px;top:0;width:1px;height:26px;background:#c8c8c8"></div><svg class="abs" style="left:290px;top:5px" width="16" height="17" viewBox="0 0 16 17"><rect x="1" y="3" width="14" height="13" rx="2" fill="none" stroke="#222" stroke-width="1.600"/><path d="M1 7h14" stroke="#222" stroke-width="1.600"/><path d="M4.500 0.500v4M11.500 0.500v4" stroke="#222" stroke-width="1.600"/><rect x="9" y="10.500" width="3.500" height="3.500" fill="#222"/></svg></div><div class="tbl" style="left:17px;top:80px;width:473px;height:200px"><div class="tr" style="top:0;background:#d8e9fc;color:#3b7dd8"><span style="left:6px;letter-spacing:-.25px">Customers</span><span style="right:229px">Count</span><span style="right:125px">Change</span><span style="right:5px">Premium</span></div><div class="tr" style="top:27.6px;background:#fff;color:#333"><span style="left:9px;color:#2f74cf;text-shadow:0 0 .5px #2f74cf;letter-spacing:0.2px">All Active</span><span style="right:233px">274</span><span style="right:144px">20</span><svg class="abs" style="left:331px;top:4px" width="14" height="15" viewBox="0 0 14 15"><path d="M1.500 7.500L7 2l5.500 5.500M1.500 13.500L7 8l5.500 5.500" fill="none" stroke="#2eaa68" stroke-width="2"/></svg><span style="right:8px">$1,186,231.22</span></div><div class="tr" style="top:55.5px;background:#f5f5f8;color:#333"><span style="left:9px;color:#2f74cf;text-shadow:0 0 .5px #2f74cf;letter-spacing:-0.2px">Active Commercial</span><span style="right:233px">52</span><span style="right:144px">3</span><svg class="abs" style="left:331px;top:4px" width="14" height="15" viewBox="0 0 14 15"><path d="M1.500 7.500L7 2l5.500 5.500M1.500 13.500L7 8l5.500 5.500" fill="none" stroke="#2eaa68" stroke-width="2"/></svg><span style="right:8px">$453,615.62</span></div><div class="tr" style="top:83.4px;background:#fff;color:#333"><span style="left:9px;color:#2f74cf;text-shadow:0 0 .5px #2f74cf;letter-spacing:-0.15px">Active Personal</span><span style="right:233px">222</span><span style="right:144px">17</span><svg class="abs" style="left:331px;top:4px" width="14" height="15" viewBox="0 0 14 15"><path d="M1.500 7.500L7 2l5.500 5.500M1.500 13.500L7 8l5.500 5.500" fill="none" stroke="#2eaa68" stroke-width="2"/></svg><span style="right:8px">$732,615.60</span></div><div class="tr" style="top:111.3px;background:#f5f5f8;color:#333"><span style="left:9px;color:#2f74cf;text-shadow:0 0 .5px #2f74cf;letter-spacing:0.1px">New Added</span><span style="right:233px">152</span><span style="right:144px">152</span><svg class="abs" style="left:331px;top:4px" width="14" height="15" viewBox="0 0 14 15"><path d="M1.500 7.500L7 2l5.500 5.500M1.500 13.500L7 8l5.500 5.500" fill="none" stroke="#2eaa68" stroke-width="2"/></svg><span style="right:8px">$159,219.92</span></div></div></div>
<div class="card" style="left:1129px;top:514px;width:507px;height:300px"><div class="chead" style="letter-spacing:-0.54px;height:29px"><span style="position:relative;z-index:2;color:#fff">Transactions by Producer</span></div><div class="ham" style="left:244px"></div><div class="sel" style="left:17px;top:47px;width:220px">--Select a Producer--</div><div class="sel" style="left:269px;top:47px;width:221px">Month</div><div class="ctitle" style="left:111px;top:89px;width:300px;line-height:16px">Producer Transaction Tracking</div><div class="abs" style="left:36px;top:117px;width:1.500px;height:120px;background:#888"></div><div class="abs" style="left:484px;top:117px;width:1px;height:120px;background:#dcdcdc"></div></div>
 <div id="panelbg"></div>
 <div id="panel">
<div class="abs" style="left:6px;top:5.500px;width:123px;height:18.500px;border-radius:5px;background:#626162"></div>
<div class="abs" style="left:58px;top:11px;width:18px;height:7px;border-top:2px solid #e2e2e2;border-bottom:2px solid #e2e2e2"></div>
<div class="pb" style="top:41.2px;">Activities By<br>Section</div>
<div class="pb" style="top:95.4px;border:1.500px solid #2f6280;background:#fdfefe;left:8px;width:110px;height:51px;margin-top:-1px;padding-top:1px;">Agency<br>Snapshot</div>
<div class="pb" style="top:149.7px;">Sales Growth<br>this Year</div>
<div class="pb" style="top:203.9px;">Carriers</div>
<div class="pb" style="top:258.2px;">Policies</div>
<div class="pb" style="top:312.5px;">Customers</div>
<div class="pb" style="top:366.7px;">Customer<br>Policies Count</div>
<div class="pb" style="top:421.0px;">Customer<br>Policies Premium<br>Range</div>
<div class="pb" style="top:475.2px;">Claims</div>
<div class="pb" style="top:529.5px;">Average Policy<br>Premium</div>
<div class="pb" style="top:583.7px;">New Business by<br>Month</div>
<div class="abs" style="left:121px;top:181px;width:6px;height:402px;border-radius:3px;background:#777"></div>
<svg class="abs" style="left:55px;top:106px" width="18" height="24" viewBox="0 0 18 24"><path d="M6 1.500c1 0 1.700.700 1.700 1.700v6.300l.600-.100c.100-.800.700-1.300 1.500-1.300s1.400.500 1.600 1.200c.300-.300.700-.400 1.100-.400.900 0 1.500.600 1.600 1.400.200-.100.500-.200.800-.200 1 0 1.600.700 1.600 1.700v4.600c0 2.700-1.800 4.600-4.500 4.600H9.500c-1.800 0-3-.800-4-2.300l-3.300-5c-.5-.800-.3-1.700.3-2.200.7-.500 1.600-.400 2.200.300l1.300 1.600V3.200c0-1 .7-1.700 1.700-1.700z" fill="#fff" stroke="#333" stroke-width=".900"/></svg>
</div>
</div>
<div id="vscroll" class="abs" style="left:1657px;top:127px;width:7px;height:732px;background:#808081;border-radius:4px 0 0 0"><div class="abs" style="left:0;top:0;width:7px;height:272px;background:#555557;border-radius:4px 0 0 4px"></div></div>
</body>
</html>
